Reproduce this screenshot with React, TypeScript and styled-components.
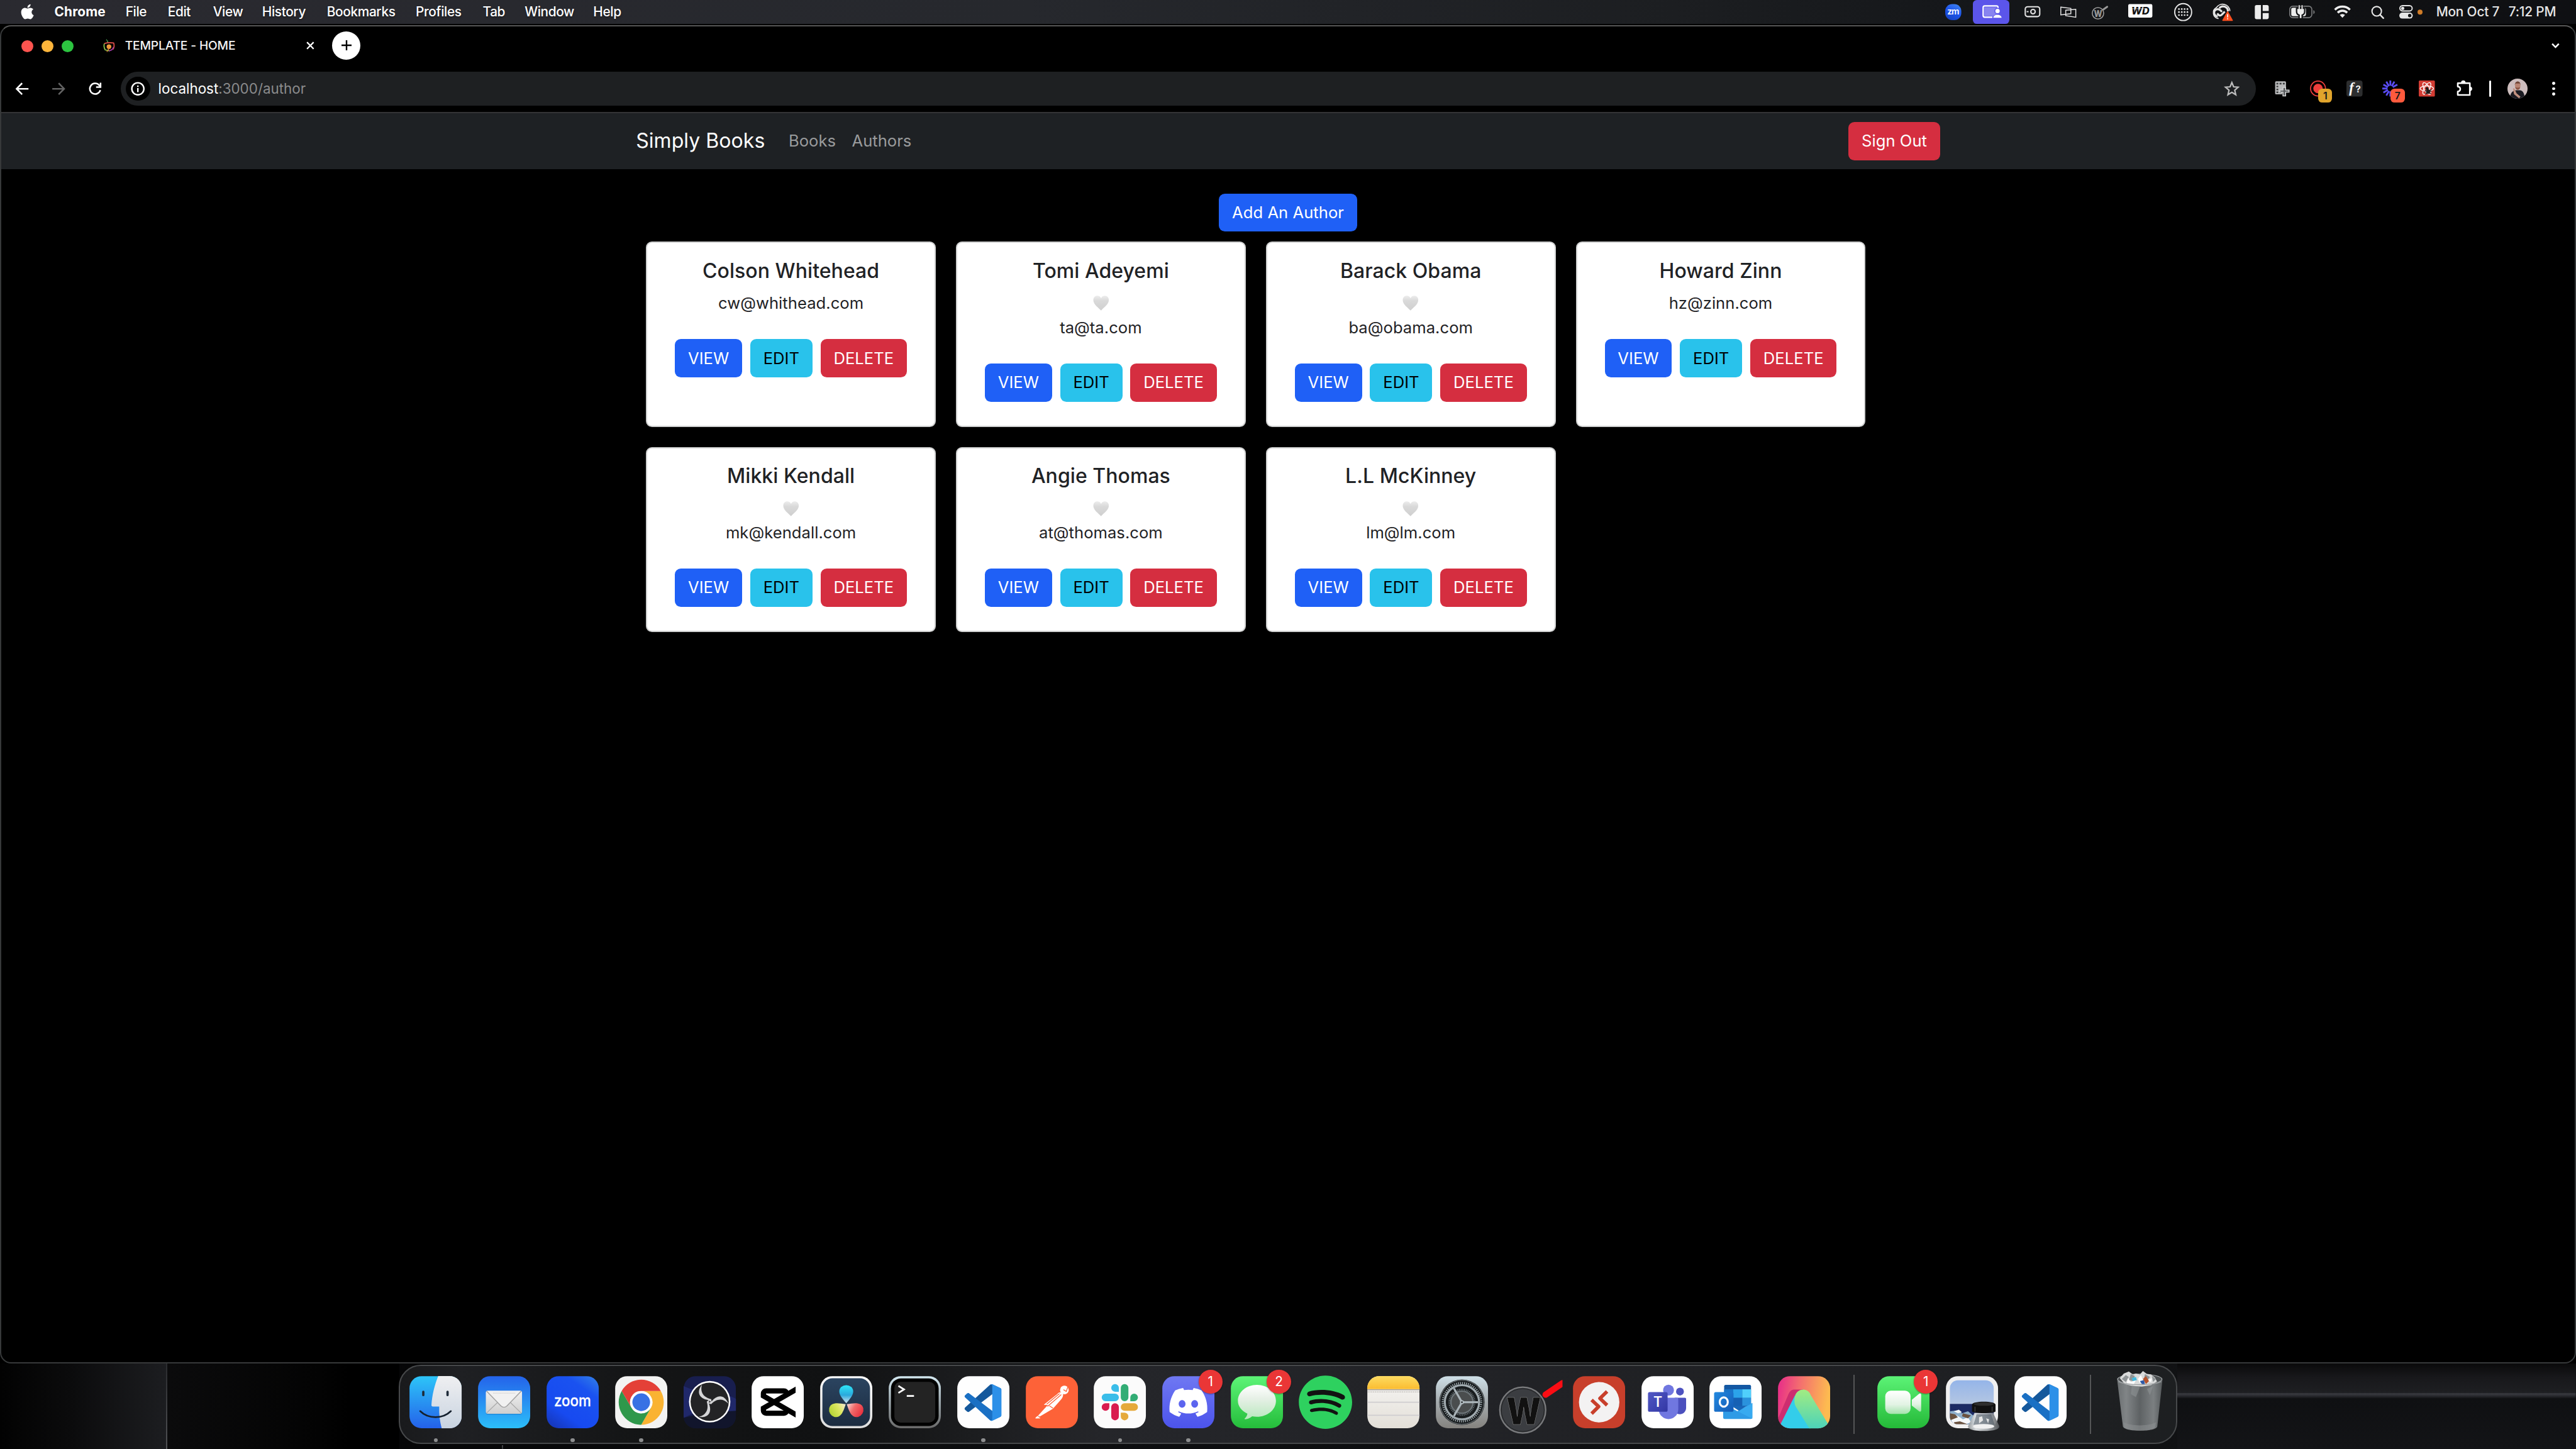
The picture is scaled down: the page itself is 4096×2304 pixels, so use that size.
import React, { ReactNode } from "react";
import styled, { createGlobalStyle, css } from "styled-components";
import { FaApple } from "react-icons/fa";
import { SiDiscord, SiSpotify } from "react-icons/si";

const GlobalStyle = createGlobalStyle`
  * { box-sizing: border-box; }
  html, body { margin: 0; padding: 0; background: #000; overflow: hidden; }
  body { font-family: Inter, "Liberation Sans", sans-serif; }
  button { font-family: inherit; }
`;

/* ---------- desktop ---------- */

const Desktop = styled.div`
  zoom: 1.6;
  width: 2560px;
  height: 1440px;
  display: flex;
  flex-direction: column;
  overflow: hidden;
  background: #000;
  color: #fff;
`;

/* ---------- menu bar ---------- */

const MenuBarRoot = styled.header`
  height: 24px;
  flex: none;
  display: flex;
  align-items: center;
  padding: 0 19.8px 0 20.3px;
  background: linear-gradient(90deg, #2a2a30 0%, #26282d 40%, #1c1e21 65%, #15171a 76%, #101113 88%, #0f1013 100%);
`;

const AppleMark = styled.span`
  width: 33.8px;
  display: flex;
  color: #fff;
  margin-top: -1px;
`;

const MenuItem = styled.span<{ $w: number; $bold?: boolean }>`
  width: ${(p) => p.$w}px;
  flex: none;
  white-space: nowrap;
  font-size: 13px;
  line-height: 24px;
  font-weight: ${(p) => (p.$bold ? 700 : 500)};
  letter-spacing: ${(p) => (p.$bold ? "0.1px" : "-0.22px")};
  text-shadow: 0 1px 2px rgba(0, 0, 0, 0.35);
`;

const StatusArea = styled.div`
  margin-left: auto;
  height: 24px;
  display: flex;
  align-items: center;
`;

const StatusIcon = styled.span<{ $gap: number; $w: number }>`
  width: ${(p) => p.$w}px;
  height: 24px;
  margin-left: ${(p) => p.$gap}px;
  display: flex;
  flex: none;
  svg { display: block; }
`;

const SharePill = styled(StatusIcon)`
  background: #5b55ea;
  border-radius: 4px;
`;

const Clock = styled.span`
  display: flex;
  gap: 9px;
  margin-left: 13.5px;
  font-size: 13px;
  font-weight: 500;
  line-height: 24px;
  letter-spacing: -0.1px;
  color: #e6e6e6;
  white-space: nowrap;
`;

const MENU: { label: string; w: number; bold?: boolean }[] = [
  { label: "Chrome", w: 70.7, bold: true },
  { label: "File", w: 41.9 },
  { label: "Edit", w: 45 },
  { label: "View", w: 48.8 },
  { label: "History", w: 64.4 },
  { label: "Bookmarks", w: 88.3 },
  { label: "Profiles", w: 66.5 },
  { label: "Tab", w: 41.7 },
  { label: "Window", w: 68.2 },
  { label: "Help", w: 30 },
];

function Glyph({ w, children }: { w: number; children: ReactNode }) {
  return (
    <svg width={w} height={24} viewBox={`0 0 ${w} 24`} fill="none" overflow="visible">
      {children}
    </svg>
  );
}

const dotRows = [9, 12, 15];
const dotCols = [4.8, 7.6, 10.4, 13.2];

function MenuBar() {
  return (
    <MenuBarRoot>
      <AppleMark>
        <FaApple size={17} style={{ marginLeft: -1.6 }} />
      </AppleMark>
      {MENU.map((m) => (
        <MenuItem key={m.label} $w={m.w} $bold={m.bold}>
          {m.label}
        </MenuItem>
      ))}
      <StatusArea>
        <StatusIcon $gap={0} $w={16}>
          <Glyph w={16}>
            <defs>
              <linearGradient id="zm" x1="0.8" y1="0" x2="0.3" y2="1">
                <stop offset="0" stopColor="#3f82ee" />
                <stop offset="0.5" stopColor="#1d55ee" />
                <stop offset="1" stopColor="#1743c4" />
              </linearGradient>
            </defs>
            <rect x="0" y="4" width="16" height="16" rx="7" fill="url(#zm)" />
            <text x="2" y="14.3" fontFamily="Inter, sans-serif" fontSize="8.6" fontWeight="600" fill="#fff" textLength="12">zm</text>
          </Glyph>
        </StatusIcon>
        <SharePill $gap={12} $w={36}>
          <Glyph w={36}>
            <path d="M25 9.5V7.5a1.6 1.6 0 0 0-1.6-1.6H11.8a1.6 1.6 0 0 0-1.6 1.6v8a1.6 1.6 0 0 0 1.6 1.6h7.6" stroke="#fff" strokeWidth="1.4" />
            <rect x="11.4" y="7.2" width="12.3" height="8.8" fill="#fff" opacity="0.28" />
            <circle cx="24.5" cy="11" r="2.7" fill="#fff" stroke="#5b55ea" strokeWidth="1" />
            <path d="M20 18c0-2.2 2-3.6 4.4-3.6S28.8 15.800 28.800 18z" fill="#fff" stroke="#5b55ea" strokeWidth="0.6" />
          </Glyph>
        </SharePill>
        <StatusIcon $gap={15} $w={16}>
          <Glyph w={16}>
            <rect x="0.8" y="6.7" width="14.4" height="9.8" rx="2.4" stroke="#e2e2e2" strokeWidth="1.3" />
            <circle cx="8.5" cy="11.6" r="2.2" stroke="#e2e2e2" strokeWidth="1.3" />
            <path d="M2.200 11.600h1.900" stroke="#e2e2e2" strokeWidth="1.200" />
          </Glyph>
        </StatusIcon>
        <StatusIcon $gap={19.5} $w={16}>
          <Glyph w={16}>
            <path d="M.5 7l10 1.300v5.300L.5 14.800zM5.400 10.200l10-1v8l-10-1.600z" stroke="#e8e8e8" strokeWidth="0.900" />
          </Glyph>
        </StatusIcon>
        <StatusIcon $gap={15.5} $w={16}>
          <Glyph w={16}>
            <circle cx="6.200" cy="13.200" r="5.700" stroke="#9a9a9a" strokeWidth="1" />
            <text x="2.200" y="16.700" fontFamily="Inter, sans-serif" fontSize="9.500" fontWeight="800" fill="#9a9a9a" textLength="8.200" lengthAdjust="spacingAndGlyphs">W</text>
            <path d="M11.600 9.400L15.400 6.700" stroke="#9a9a9a" strokeWidth="1.800" strokeLinecap="round" />
          </Glyph>
        </StatusIcon>
        <StatusIcon $gap={20} $w={24}>
          <Glyph w={24}>
            <rect x="0" y="4" width="24" height="13.500" rx="1.500" fill="#fff" />
            <text x="3" y="14.500" fontFamily="Inter, sans-serif" fontSize="10" fontWeight="800" fontStyle="italic" fill="#111" textLength="18" lengthAdjust="spacingAndGlyphs">WD</text>
            <path d="M3.500 8.700H19" stroke="#fff" strokeWidth="0.350" />
          </Glyph>
        </StatusIcon>
        <StatusIcon $gap={22} $w={18}>
          <Glyph w={18}>
            <circle cx="9" cy="12" r="8.400" stroke="#e8e8e8" strokeWidth="1.200" />
            {dotRows.map((y) => dotCols.map((x) => <circle key={`${x}-${y}`} cx={x} cy={y} r="0.850" fill="#e8e8e8" />))}
          </Glyph>
        </StatusIcon>
        <StatusIcon $gap={19} $w={22}>
          <Glyph w={22}>
            <path d="M7.300 18.300H6.800A5.800 5.800 0 0 1 5.200 7.500 7.300 7.300 0 0 1 18.600 11" stroke="#e6e6e6" strokeWidth="1.100" />
            <path d="M6.500 16.300a3.600 3.600 0 0 1 0-7.200c1.900 0 2.700 1 4.200 2.700M8 8.200a4.800 4.800 0 0 1 8.600 3M6 13.300c1.400 2.200 3 2.700 4.300 1.500l3.200-3.300" stroke="#e6e6e6" strokeWidth="2" />
            <path d="M16.300 11.600L21 20.300H11.500z" fill="#fa4e1e" stroke="#fa4e1e" strokeLinejoin="round" />
            <path d="M16.300 14v3.300M16.300 18.200v1" stroke="#fff" strokeWidth="1" />
          </Glyph>
        </StatusIcon>
        <StatusIcon $gap={21} $w={14}>
          <Glyph w={14}>
            <path d="M2 5h4.300v14H2a1.800 1.800 0 0 1-1.800-1.800V6.800A1.800 1.800 0 0 1 2 5zM8 5h4.300A1.800 1.800 0 0 1 14 6.800V11H8zM8 13h6v4.200A1.800 1.800 0 0 1 12.300 19H8z" fill="#ececec" />
          </Glyph>
        </StatusIcon>
        <StatusIcon $gap={20} $w={26}>
          <Glyph w={26}>
            <rect x="0.500" y="6.200" width="22" height="11.400" rx="3.200" stroke="#7b7c7e" strokeWidth="1" />
            <path d="M24 10v4a2.200 2.200 0 0 0 0-4z" fill="#7b7c7e" />
            <rect x="2" y="7.700" width="14.600" height="8.400" rx="1.800" fill="#ececec" />
            <path d="M9.700 5.500v3M12.900 5.500v3M7.700 8.700h7.200v2.600a3.600 3.600 0 0 1-2.500 3.500V18h-2.200v-3.200a3.600 3.600 0 0 1-2.500-3.500z" fill="#ececec" stroke="#101113" strokeWidth="2.200" />
            <path d="M9.900 5.600v3.200M12.800 5.600v3.200" stroke="#ececec" strokeWidth="1.200" strokeLinecap="round" />
            <path d="M8 8.900h6.700v2.400a3.300 3.300 0 0 1-2.500 3.300V18h-1.700v-3.400A3.300 3.300 0 0 1 8 11.300z" fill="#ececec" />
          </Glyph>
        </StatusIcon>
        <StatusIcon $gap={18.5} $w={17}>
          <Glyph w={17}>
            <path d="M1 9.700a10.700 10.700 0 0 1 15 0M3.800 12.600a6.700 6.700 0 0 1 9.400 0" stroke="#ececec" strokeWidth="2.200" />
            <path d="M8.500 17.600L5.900 14.900a3.700 3.700 0 0 1 5.200 0z" fill="#ececec" />
          </Glyph>
        </StatusIcon>
        <StatusIcon $gap={20} $w={13}>
          <Glyph w={13}>
            <circle cx="5.700" cy="11.200" r="4.700" stroke="#e6e6e6" strokeWidth="1.300" />
            <path d="M9 14.600l3.300 3.400" stroke="#e6e6e6" strokeWidth="1.600" strokeLinecap="round" />
          </Glyph>
        </StatusIcon>
        <StatusIcon $gap={15.3} $w={13.5}>
          <Glyph w={13.5}>
            <rect x="0.600" y="5.600" width="12.200" height="5.300" rx="2.650" stroke="#e6e6e6" strokeWidth="1.200" />
            <circle cx="3.400" cy="8.250" r="1.600" fill="#e6e6e6" />
            <rect x="0" y="12.500" width="13.400" height="6" rx="3" fill="#e6e6e6" />
            <circle cx="10.400" cy="15.500" r="1.700" fill="#101113" />
          </Glyph>
        </StatusIcon>
        <StatusIcon $gap={4.5} $w={5}>
          <Glyph w={5}>
            <circle cx="2.500" cy="12" r="2.500" fill="#d07c28" />
          </Glyph>
        </StatusIcon>
        <Clock>
          <span>Mon Oct 7</span>
          <span>7:12 PM</span>
        </Clock>
      </StatusArea>
    </MenuBarRoot>
  );
}

/* ---------- browser window ---------- */

const BrowserWindow = styled.section`
  height: 1330px;
  margin-top: 1px;
  flex: none;
  display: flex;
  flex-direction: column;
  background: #000;
  border: 1.25px solid #37393a;
  border-top-color: #565656;
  border-radius: 11px;
  overflow: hidden;
`;

const TabStrip = styled.div`
  height: 38px;
  flex: none;
  display: flex;
  align-items: center;
  padding: 0 15px 0 20px;
`;

const TrafficLight = styled.i<{ $c: string }>`
  width: 12px;
  height: 12px;
  border-radius: 50%;
  margin: 1px 8px 0 0;
  background: ${(p) => p.$c};
`;

const Tab = styled.div`
  width: 210px;
  margin-left: 21px;
  display: flex;
  align-items: center;
  gap: 10px;
`;

const TabTitle = styled.span`
  flex: 1;
  font-size: 12px;
  font-weight: 500;
  letter-spacing: -0.1px;
  line-height: 16px;
  color: #f4f4f4;
`;

const NewTab = styled.button`
  width: 28px;
  height: 28px;
  border: 0;
  padding: 0;
  border-radius: 50%;
  background: #fff;
  margin-left: 18px;
  display: grid;
  place-items: center;
`;

const TabSearch = styled.span`
  margin-left: auto;
  display: flex;
`;

const Toolbar = styled.div`
  height: 48px;
  flex: none;
  display: flex;
  align-items: center;
  padding: 1px 13px 0 7px;
  border-bottom: 1.25px solid #333436;
`;

const NavButton = styled.span`
  width: 28px;
  height: 28px;
  margin-right: 8px;
  display: grid;
  place-items: center;
`;

const Omnibox = styled.div`
  flex: 1;
  height: 34px;
  margin-left: 4px;
  border-radius: 17px;
  background: #1e2022;
  display: flex;
  align-items: center;
  padding: 0 16px 0 5px;
  font-size: 14px;
  svg { display: block; }
`;

const SiteInfo = styled.span`
  width: 24px;
  height: 24px;
  border-radius: 50%;
  background: #000;
  display: grid;
  place-items: center;
  margin-right: 8px;
`;

const Url = styled.span`
  flex: 1;
  color: #fff;
  span { color: #8a8b8c; }
`;

const Extensions = styled.div`
  display: flex;
  gap: 20px;
  margin-left: 18px;
`;

const Extension = styled.span`
  position: relative;
  width: 16px;
  height: 16px;
  svg { display: block; overflow: visible; }
`;

const ExtensionBadge = styled.b<{ $c: string }>`
  position: absolute;
  left: 8px;
  top: 8px;
  width: 14px;
  height: 14px;
  border-radius: 4px;
  background: ${(p) => p.$c};
  color: #1b1b1b;
  font-size: 10px;
  font-weight: 600;
  line-height: 14px;
  text-align: center;
`;

const ToolbarDivider = styled.i`
  width: 2px;
  height: 16px;
  border-radius: 1px;
  background: #fff;
  margin: 0 16px 0 18px;
`;

const Avatar = styled.span`
  width: 20px;
  height: 20px;
  border-radius: 50%;
  overflow: hidden;
  svg { display: block; }
`;

const Kebab = styled.span`
  margin-left: 18px;
  width: 16px;
  display: flex;
  flex-direction: column;
  align-items: center;
  gap: 2.5px;
  i { width: 3px; height: 3px; border-radius: 50%; background: #fff; }
`;

const spokes = [0, 30, 60, 180, 210, 240, 270, 300, 330];

function BrowserChrome() {
  return (
    <>
      <TabStrip>
        <TrafficLight $c="#fe544f" />
        <TrafficLight $c="#fdb53b" />
        <TrafficLight $c="#2cc440" />
        <Tab>
          <svg width="12" height="13" viewBox="0 0 12 13" fill="none" overflow="visible">
            <path d="M4.800 3.600L3.200.3M5 3.600L4.200 1.500" stroke="#3f8f4a" strokeWidth="0.800" />
            <path d="M1.200 4.600c-.6 2-.5 4 .8 6.200l4.400 1" stroke="#8bc34a" strokeWidth="1.100" />
            <path d="M1.300 4.500C4 3.600 8 3.500 10.500 4c.7 2.200.4 4.500-.6 6.400" stroke="#e2504a" strokeWidth="1.100" />
            <path d="M10.300 8c-.4 2-2 3.300-4.500 3.800" stroke="#a63da8" strokeWidth="1.100" />
            <circle cx="5.800" cy="7.600" r="2.300" fill="#ef9a3a" />
            <path d="M4 11.500v1.300M5.800 9l-1 2.500" stroke="#e5893a" strokeWidth="0.900" />
          </svg>
          <TabTitle>TEMPLATE - HOME</TabTitle>
          <svg width="8" height="8" viewBox="0 0 8 8">
            <path d="M.7.700l6.600 6.600M7.300.700L.7 7.300" stroke="#fff" strokeWidth="1.400" />
          </svg>
        </Tab>
        <NewTab>
          <svg width="10" height="10" viewBox="0 0 10 10">
            <path d="M5 0v10M0 5h10" stroke="#000" strokeWidth="1.500" />
          </svg>
        </NewTab>
        <TabSearch>
          <svg width="8" height="6" viewBox="0 0 8 6" fill="none">
            <path d="M.7 1l3.300 3.400L7.300 1" stroke="#fff" strokeWidth="1.600" />
          </svg>
        </TabSearch>
      </TabStrip>
      <Toolbar>
        <NavButton>
          <svg width="14" height="14" viewBox="0 0 14 14" fill="none">
            <path d="M13.300 7H1.800M7 1.400L1.500 7l5.500 5.600" stroke="#fff" strokeWidth="1.600" />
          </svg>
        </NavButton>
        <NavButton>
          <svg width="14" height="14" viewBox="0 0 14 14" fill="none">
            <path d="M.7 7h11.500M7 1.400L12.500 7 7 12.600" stroke="#626262" strokeWidth="1.600" />
          </svg>
        </NavButton>
        <NavButton>
          <svg width="14" height="14" viewBox="0 0 14 14" fill="none">
            <path d="M12.200 8.300A5.300 5.300 0 1 1 11 3.300L12.300 4.700" stroke="#fff" strokeWidth="1.600" />
            <path d="M12.400 1v4.300H8" stroke="#fff" strokeWidth="1.600" />
          </svg>
        </NavButton>
        <Omnibox>
          <SiteInfo>
            <svg width="14" height="14" viewBox="0 0 14 14" fill="none">
              <circle cx="7" cy="7" r="6" stroke="#fff" strokeWidth="1.500" />
              <path d="M7 6.300v4M7 3.700v1.500" stroke="#fff" strokeWidth="1.500" />
            </svg>
          </SiteInfo>
          <Url>
            localhost<span>:3000/author</span>
          </Url>
          <svg width="16" height="16" viewBox="0 0 16 16" fill="none">
            <path d="M8 2l1.750 4.250 4.550.4-3.450 3 1.050 4.450L8 11.700l-3.900 2.400 1.050-4.450-3.450-3 4.550-.4z" stroke="#bdbdbd" strokeWidth="1.400" />
          </svg>
        </Omnibox>
        <Extensions>
          <Extension>
            <svg width="16" height="16" viewBox="0 0 16 16" fill="none">
              <path d="M2 .8h8.800a1 1 0 0 1 1 1V8L8 9v4.800H2a1 1 0 0 1-1-1v-11a1 1 0 0 1 1-1z" fill="#b9babb" />
              <path d="M2.300 3.100h1.800M5.400 3.100h1.900M8.700 3.100h1.800M2.300 6h1.800M2.300 8.900h1.800M2.300 11.700h1.800M5.400 11.700h1.300" stroke="#3a3b3c" strokeWidth="1.500" />
              <path d="M8.800 6.900h2.600v2.600h3.400v2.100h-3.400v3.700H8.800v-3.700H5.600V9.500h3.200z" fill="#55585a" stroke="#d0d1d2" strokeWidth="1" />
            </svg>
          </Extension>
          <Extension>
            <svg width="16" height="16" viewBox="0 0 16 16" fill="none">
              <circle cx="8" cy="8" r="7.400" stroke="#ee3f3c" strokeWidth="1.100" />
              <circle cx="8" cy="8" r="4.700" fill="#ee3f3c" />
            </svg>
            <ExtensionBadge $c="#e0a42c">1</ExtensionBadge>
          </Extension>
          <Extension>
            <svg width="16" height="16" viewBox="0 0 16 16">
              <rect width="16" height="16" rx="2.500" fill="#2d2e2f" />
              <text x="2.600" y="12" fontFamily="'Liberation Serif', serif" fontStyle="italic" fontWeight="700" fontSize="14" fill="#fff">f</text>
              <text x="9" y="12" fontFamily="Inter, sans-serif" fontWeight="600" fontSize="9.500" fill="#fff">?</text>
            </svg>
          </Extension>
          <Extension>
            <svg width="16" height="16" viewBox="0 0 16 16">
              {spokes.map((a) => (
                <path key={a} d="M8 0v5.200" stroke="#5a4cf6" strokeWidth="1.800" transform={`rotate(${a} 8 8)`} />
              ))}
            </svg>
            <ExtensionBadge $c="#ff5a3d">7</ExtensionBadge>
          </Extension>
          <Extension>
            <svg width="16" height="16" viewBox="0 0 16 16" fill="none">
              <rect width="16" height="16" rx="1" fill="#d23c33" />
              <g stroke="#fff" strokeWidth="0.800">
                <ellipse cx="8" cy="8" rx="6.600" ry="2.600" />
                <ellipse cx="8" cy="8" rx="6.600" ry="2.600" transform="rotate(60 8 8)" />
                <ellipse cx="8" cy="8" rx="6.600" ry="2.600" transform="rotate(120 8 8)" />
              </g>
              <ellipse cx="9.200" cy="11" rx="1.700" ry="2.400" fill="#1d1d1d" />
              <circle cx="8.200" cy="7.900" r="1.400" fill="#1d1d1d" />
              <path d="M6.200 10l6 3M12.300 8.800l-5.800 5M7 12.400l5.500-2" stroke="#1d1d1d" strokeWidth="0.900" />
            </svg>
          </Extension>
          <Extension>
            <svg width="16" height="16" viewBox="0 0 16 16" fill="none">
              <path d="M2.500 2.300h12v11.800h-12V10.700a2.500 2.500 0 0 0 0-5z" transform="translate(0 .3)" stroke="#fff" strokeWidth="1.600" strokeLinejoin="round" />
              <path d="M5.900 2.200a2.100 2.100 0 0 1 4.200 0zM14.600 6.300a2 2 0 0 1 0 4z" fill="#fff" stroke="#fff" strokeWidth="0.500" />
            </svg>
          </Extension>
        </Extensions>
        <ToolbarDivider />
        <Avatar>
          <svg width="20" height="20" viewBox="0 0 20 20">
            <rect width="20" height="20" fill="#cdbdbd" />
            <path d="M2.500 20c0-5 2-8 6-8.500h4c3.500.5 4.500 4 4.500 8.500z" fill="#1b1b22" />
            <ellipse cx="10.200" cy="7" rx="2.700" ry="3.700" fill="#b98472" />
            <path d="M7.300 6.500c0-5 5.800-5 5.800 0l-.7-1.700H8z" fill="#6e4334" />
            <path d="M7.700 8.300c.5 3.800 4.500 3.800 5 0-1.300 1-3.500 1-5 0z" fill="#8a5342" />
            <path d="M5.500 9.500l1.500.3L9 14.500l4 3.500-1.500 1.500-5-4z" fill="#c0907f" />
          </svg>
        </Avatar>
        <Kebab>
          <i />
          <i />
          <i />
        </Kebab>
      </Toolbar>
    </>
  );
}

/* ---------- page ---------- */

type Variant = "primary" | "info" | "danger";

const variants: Record<Variant, ReturnType<typeof css>> = {
  primary: css`background: #1f60f6; color: #fff;`,
  info: css`background: #29c2eb; color: #000;`,
  danger: css`background: #d52e40; color: #fff;`,
};

const Button = styled.button<{ $variant: Variant }>`
  height: 38px;
  padding: 0 13px;
  border: 0;
  border-radius: 6px;
  font-size: 16px;
  line-height: 24px;
  letter-spacing: 0.02px;
  white-space: nowrap;
  ${(p) => variants[p.$variant]}
`;

const Navbar = styled.nav`
  height: 56px;
  flex: none;
  background: #1e2124;
  display: flex;
  justify-content: center;
`;

const NavContainer = styled.div`
  width: 1296px;
  display: flex;
  align-items: center;
`;

const Brand = styled.a`
  font-size: 20px;
  line-height: 30px;
  margin-right: 15.5px;
  letter-spacing: 0.03px;
`;

const NavLink = styled.a`
  padding: 8px;
  font-size: 16px;
  line-height: 24px;
  color: #999b9c;
`;

const SignOutSlot = styled.div`
  margin-left: auto;
`;

const Page = styled.main`
  width: 1296px;
  margin: 24px auto 0;
  display: flex;
  flex-direction: column;
  align-items: center;
`;

const CardGrid = styled.div`
  width: 100%;
  display: flex;
  flex-wrap: wrap;
`;

const Card = styled.article`
  width: 288px;
  height: 184px;
  margin: 10px;
  padding: 16px 15px;
  border: 1.25px solid #cfd0d0;
  border-radius: 6px;
  background: #fff;
  color: #1f2225;
  display: flex;
  flex-direction: column;
  align-items: center;
`;

const AuthorName = styled.h5`
  margin: 0 0 8px;
  font-size: 20px;
  font-weight: 500;
  line-height: 24px;
  letter-spacing: 0.03px;
`;

const Favorite = styled.div`
  height: 24px;
  display: flex;
  align-items: center;
  svg { display: block; }
`;

const Email = styled.p`
  margin: 0 0 23.6px;
  font-size: 16px;
  line-height: 24px;
  letter-spacing: 0.02px;
`;

const CardActions = styled.div`
  display: flex;
  gap: 8px;
`;

const AUTHORS = [
  { name: "Colson Whitehead", email: "cw@whithead.com", favorite: false },
  { name: "Tomi Adeyemi", email: "ta@ta.com", favorite: true },
  { name: "Barack Obama", email: "ba@obama.com", favorite: true },
  { name: "Howard Zinn", email: "hz@zinn.com", favorite: false },
  { name: "Mikki Kendall", email: "mk@kendall.com", favorite: true },
  { name: "Angie Thomas", email: "at@thomas.com", favorite: true },
  { name: "L.L McKinney", email: "lm@lm.com", favorite: true },
];

function Heart() {
  return (
    <svg width="16" height="15" viewBox="0 0 16 15">
      <defs>
        <linearGradient id="heart" x1="0" y1="0" x2="0" y2="1">
          <stop offset="0" stopColor="#ececec" />
          <stop offset="0.35" stopColor="#d9d9d9" />
          <stop offset="1" stopColor="#cfcfcf" />
        </linearGradient>
      </defs>
      <path d="M8 14.800C5.800 12.300.3 8.900.3 4.500.3 1.900 2 .2 4.300.2c1.700 0 3 .9 3.700 2.400C8.700 1.100 10 .2 11.700.2c2.300 0 4 1.700 4 4.300 0 4.400-5.500 7.800-7.700 10.300z" fill="url(#heart)" />
    </svg>
  );
}

function AuthorsPage() {
  return (
    <>
      <Navbar>
        <NavContainer>
          <Brand>Simply Books</Brand>
          <NavLink>Books</NavLink>
          <NavLink>Authors</NavLink>
          <SignOutSlot>
            <Button $variant="danger">Sign Out</Button>
          </SignOutSlot>
        </NavContainer>
      </Navbar>
      <Page>
        <Button $variant="primary">Add An Author</Button>
        <CardGrid>
          {AUTHORS.map((a) => (
            <Card key={a.name}>
              <AuthorName>{a.name}</AuthorName>
              {a.favorite && (
                <Favorite>
                  <Heart />
                </Favorite>
              )}
              <Email>{a.email}</Email>
              <CardActions>
                <Button $variant="primary">VIEW</Button>
                <Button $variant="info">EDIT</Button>
                <Button $variant="danger">DELETE</Button>
              </CardActions>
            </Card>
          ))}
        </CardGrid>
      </Page>
    </>
  );
}

/* ---------- dock ---------- */

const Wallpaper = styled.footer`
  flex: 1;
  display: flex;
  justify-content: center;
  align-items: flex-start;
  padding-top: 1px;
  background:
    linear-gradient(90deg, #020202 0, #0b0b0c 70px, #1c1d20 164px) 0 0 / 165px 100% no-repeat,
    linear-gradient(#2a2b2e, #505154) 165px 0 / 1.25px 100% no-repeat,
    linear-gradient(90deg, #0b0b0c 0, #030303 150px, #000 180px) 167px 0 / 230px 100% no-repeat,
    linear-gradient(#4a4b4e, #2a2b2e) 499px 100% / 1.25px 4px no-repeat,
    linear-gradient(#0a0a0b 0, #18181b 14px, #1e1f22 29px, #3a3b41 30px, #2b2c31 32px, #0f1012 35px, #131417 100%) 2164px 0 / 396px 100% no-repeat,
    linear-gradient(90deg, #141517 0, #050506 300px, #0c0d0f 900px, #121315 100%);
`;

const DockBar = styled.div`
  height: 79px;
  display: flex;
  gap: 16px;
  padding: 10px 9.5px 0;
  border: 1.25px solid #47494b;
  border-radius: 22px;
  background: linear-gradient(90deg, #191a1c 0, #1f2023 60px, #141516 230px, #101112 430px, #1b1c1e 560px, #25262a 700px, #222327 1000px, #1f2023 1400px, #1d1f21 100%);
`;

const DockItem = styled.div`
  position: relative;
  width: 52px;
  height: 52px;
  svg { display: block; overflow: visible; }
`;

const DockBadge = styled.span`
  position: absolute;
  top: -6px;
  right: -8px;
  width: 24px;
  height: 24px;
  border-radius: 50%;
  background: #ea3636;
  color: #fff;
  font-size: 13px;
  line-height: 24px;
  text-align: center;
  box-shadow: 0 0.5px 1.5px rgba(0, 0, 0, 0.4);
`;

const RunningDot = styled.i`
  position: absolute;
  left: 24px;
  top: 62px;
  width: 4px;
  height: 4px;
  border-radius: 50%;
  background: #8e8f90;
`;

const DockDivider = styled.i`
  width: 1px;
  height: 59px;
  margin: -1px 7px 0;
  background: #545556;
`;

const Shape = ({ fill, children }: { fill: string; children?: ReactNode }) => (
  <>
    <rect x="0.100" y="0.100" width="51.800" height="51.800" rx="12" fill={fill} />
    {children}
  </>
);

const Grad = ({ id, stops, x1 = 0, y1 = 0, x2 = 0, y2 = 1 }: { id: string; stops: [number, string][]; x1?: number; y1?: number; x2?: number; y2?: number }) => (
  <linearGradient id={id} x1={x1} y1={y1} x2={x2} y2={y2}>
    {stops.map(([o, c]) => (
      <stop key={o} offset={o} stopColor={c} />
    ))}
  </linearGradient>
);

function FinderArt() {
  return (
    <>
      <Grad id="fin1" stops={[[0, "#2dc5f8"], [1, "#2461ea"]]} />
      <Grad id="fin2" stops={[[0, "#efeff1"], [1, "#c8d3e0"]]} />
      <clipPath id="sq"><rect width="52" height="52" rx="12" /></clipPath>
      <Shape fill="url(#fin1)" />
      <path clipPath="url(#sq)" d="M28.600 0C25 9 22.500 19 21.900 28.600c-.1 1.200.4 1.700 1.500 1.700h6.200c-.3 8 .7 15 2.500 21.700H52V0z" fill="url(#fin2)" />
      <path d="M13.800 15.700v3.200M37.900 15.700v3.200" stroke="#1e2a38" strokeWidth="2.300" strokeLinecap="round" />
      <path d="M10.700 34.900c8 8 22.500 8 30.500 0" fill="none" stroke="#14202e" strokeWidth="1.700" strokeLinecap="round" />
    </>
  );
}

function MailArt() {
  return (
    <>
      <Grad id="mail" stops={[[0, "#2463ea"], [1, "#2cbef9"]]} />
      <Grad id="env" stops={[[0, "#f0f0f0"], [1, "#cfcfcf"]]} />
      <Shape fill="url(#mail)" />
      <rect x="7.800" y="14.800" width="36" height="23.500" rx="2" fill="#0a4fa0" opacity="0.35" />
      <rect x="7.800" y="14.500" width="36" height="23" rx="2" fill="url(#env)" />
      <path d="M8.500 36.800l10.800-10.400M43 36.800L32.300 26.400" stroke="#a9a9a9" strokeWidth="0.800" />
      <path d="M8.600 15l14.200 14.700c1.800 1.700 4.200 1.700 6 0L43 15" fill="#f1f1f1" stroke="#a3a3a3" strokeWidth="1" />
      <path d="M15 17h22" stroke="#d8d8d8" strokeWidth="0.900" strokeDasharray="1 0.400" />
    </>
  );
}

function ZoomArt() {
  return (
    <>
      <Grad id="zoomg" x1={0.9} y1={0} x2={0.2} y2={1} stops={[[0, "#2f7ae8"], [0.25, "#1a52f0"], [0.75, "#174af0"], [1, "#1639c0"]]} />
      <Shape fill="url(#zoomg)" />
      <text x="7.500" y="30" fontFamily="Inter, sans-serif" fontSize="15.600" fontWeight="500" fill="#fff" stroke="#fff" strokeWidth="0.200" textLength="36.800" lengthAdjust="spacingAndGlyphs">zoom</text>
    </>
  );
}

function ChromeArt() {
  const seg = "M-19.400-11.200A22.400 22.400 0 0 1 19.400-11.200H0A11.200 11.200 0 0 0-9.700 5.600z";
  return (
    <>
      <Shape fill="#f3f3f2" />
      <g transform="translate(26 26)">
        <path d={seg} fill="#fab332" transform="rotate(120)" />
        <path d={seg} fill="#2f984b" transform="rotate(240)" />
        <path d={seg} fill="#e44037" />
        <circle r="11" fill="#fff" />
        <circle r="8.800" fill="#3871e4" />
      </g>
    </>
  );
}

function ObsArt() {
  const blade = "M-7.600-17C-13.500-9.500-10.500-3-1.500-1.600L2 .5 1.500-2.500C-5.500-4-10-9-7.600-17z";
  return (
    <>
      <Shape fill="#181e4e">
        <path d="M0 10L10 14 16 34 0 41.500zM40 17l12 5.500V34.500l-12 3z" fill="#20286a" />
        <path d="M0 41.500l20-5 32-2V40a12 12 0 0 1-12 12H12A12 12 0 0 1 0 40z" fill="#11152c" />
      </Shape>
      <g transform="translate(25.900 25.500)">
        <circle r="20.600" fill="#fff" />
        <circle r="19" fill="#232325" />
        {[0, 120, 240].map((a) => (
          <path key={a} d={blade} fill="#d4d4d6" transform={`rotate(${a})`} />
        ))}
      </g>
    </>
  );
}

function CapCutArt() {
  const half = "M46 39.500L11.800 19.800V17.500a2.700 2.700 0 0 1 2.700-2.700H32.200a2.700 2.700 0 0 1 2.700 2.700V20";
  return (
    <>
      <Shape fill="#fff" />
      <clipPath id="cc"><rect x="8" y="10" width="35.800" height="32" /></clipPath>
      <g clipPath="url(#cc)" fill="none" stroke="#000" strokeWidth="5.200">
        <path d={half} />
        <path d={half} transform="matrix(1 0 0 -1 0 51.800)" />
      </g>
    </>
  );
}

function ResolveArt() {
  const petal = "M0-.6C-3.800-5-6.900-8.800-6.900-12.400a6.900 6.300 0 0 1 13.800 0C6.900-8.800 3.800-5 0-.6z";
  return (
    <>
      <Grad id="rs0" stops={[[0, "#fdfdfd"], [1, "#dcdcdc"]]} />
      <Grad id="rs1" stops={[[0, "#2b4460"], [1, "#1c2c40"]]} />
      <Grad id="rs2" stops={[[0, "#2ee6f8"], [0.55, "#2aa9dc"], [1, "#d8e6f0"]]} />
      <Grad id="rs3" stops={[[0, "#b4d435"], [0.55, "#dde860"], [1, "#f6e8d8"]]} />
      <Grad id="rs4" stops={[[0, "#e8303e"], [0.55, "#f06a6a"], [1, "#f8dcd8"]]} />
      <Shape fill="url(#rs0)" />
      <rect x="2.300" y="2.200" width="47.300" height="47.500" rx="10" fill="url(#rs1)" />
      <g transform="translate(26 27.700)">
        <path d={petal} fill="url(#rs2)" />
        <path d={petal} fill="url(#rs3)" transform="rotate(-121)" />
        <path d={petal} fill="url(#rs4)" transform="rotate(121)" />
      </g>
    </>
  );
}

function TerminalArt() {
  return (
    <>
      <Grad id="tm" stops={[[0, "#d3e8f0"], [0.5, "#9aa5aa"], [1, "#6a6a6a"]]} />
      <Shape fill="url(#tm)" />
      <rect x="2.300" y="2.300" width="47.400" height="47.400" rx="10" fill="#020202" />
      <rect x="5.700" y="5.800" width="40.600" height="40.400" rx="6" fill="#232323" />
      <path d="M9.700 9.800l5.600 3.500-5.600 3.500M18 19.800h7.200" fill="none" stroke="#fff" strokeWidth="1.700" />
    </>
  );
}

function VsCodeArt() {
  return (
    <>
      <Shape fill="#fefefe" />
      <g transform="translate(7.400 8) scale(.366)">
        <path fill="#14589c" d="M96.460 10.800L75.860.88C73.470-.27 70.620.21 68.750 2.080L1.300 63.580C-.52 65.240-.51 68.090 1.300 69.750L6.810 74.750C8.300 76.100 10.530 76.200 12.130 74.990L93.360 13.370C96.090 11.300 100 13.250 100 16.670V16.430C100 14.030 98.620 11.840 96.460 10.800Z" />
        <path fill="#1a70c4" d="M96.460 89.200L75.860 99.120C73.470 100.270 70.620 99.790 68.750 97.920L1.300 36.420C-.52 34.760-.51 31.910 1.300 30.250L6.810 25.250C8.300 23.900 10.530 23.800 12.130 25.010L93.360 86.630C96.090 88.700 100 86.750 100 83.330V83.570C100 85.970 98.620 88.160 96.460 89.200Z" />
        <path fill="#2c90e8" d="M75.860 99.130C73.470 100.270 70.620 99.790 68.750 97.920C71.060 100.220 75 98.590 75 95.330V4.670C75 1.410 71.060-.22 68.750 2.080C70.620.21 73.470-.27 75.860.87L96.460 10.780C98.620 11.820 100 14.010 100 16.410V83.590C100 85.990 98.620 88.180 96.460 89.220L75.860 99.130Z" />
      </g>
    </>
  );
}

function PostmanArt() {
  return (
    <>
      <Shape fill="#fd6238" />
      <circle cx="38.400" cy="13.900" r="4.300" fill="#fff" />
      <path d="M31.500 17.800c1.500-2 3.700-2 5.500-.3.500 2-.3 3.800-1.600 5.500L27 32.500 13.500 40.500l1 1.500-4.800.2c-.3-1 .8-1.800 2-2.200L21.500 29.200 18 28.500z" fill="#fff" />
      <path d="M35.300 18.500L22 29.800 19.300 28.800M33.500 17.500L20.800 28M23.500 29.500l3.700 2.500M12.500 39.800l1.300 1.300M37.500 13.500l2.800 1.800 1.500-4.500" fill="none" stroke="#fd6238" strokeWidth="0.800" />
    </>
  );
}

const SLACK: [string, string][] = [
  ["#d91c4f", "M5.042 15.165a2.528 2.528 0 0 1-2.520 2.523A2.528 2.528 0 0 1 0 15.165a2.527 2.527 0 0 1 2.522-2.520h2.520zM6.313 15.165a2.527 2.527 0 0 1 2.521-2.520 2.527 2.527 0 0 1 2.521 2.520v6.313A2.528 2.528 0 0 1 8.834 24a2.528 2.528 0 0 1-2.521-2.522z"],
  ["#3abde9", "M8.834 5.042a2.528 2.528 0 0 1-2.521-2.520A2.528 2.528 0 0 1 8.834 0a2.528 2.528 0 0 1 2.521 2.522v2.520zM8.834 6.313a2.528 2.528 0 0 1 2.521 2.521 2.528 2.528 0 0 1-2.521 2.521H2.522A2.528 2.528 0 0 1 0 8.834a2.528 2.528 0 0 1 2.522-2.521z"],
  ["#32ad75", "M18.956 8.834a2.528 2.528 0 0 1 2.522-2.521A2.528 2.528 0 0 1 24 8.834a2.528 2.528 0 0 1-2.522 2.521h-2.522zM17.688 8.834a2.528 2.528 0 0 1-2.523 2.521 2.527 2.527 0 0 1-2.520-2.521V2.522A2.527 2.527 0 0 1 15.165 0a2.528 2.528 0 0 1 2.523 2.522z"],
  ["#e5a93b", "M15.165 18.956a2.528 2.528 0 0 1 2.523 2.522A2.528 2.528 0 0 1 15.165 24a2.527 2.527 0 0 1-2.520-2.522v-2.522zM15.165 17.688a2.527 2.527 0 0 1-2.520-2.523 2.526 2.526 0 0 1 2.520-2.520h6.313A2.527 2.527 0 0 1 24 15.165a2.528 2.528 0 0 1-2.522 2.523z"],
];

function SlackArt() {
  return (
    <>
      <Shape fill="#fbfbfb" />
      <g transform="translate(8 8) scale(1.5)">
        {SLACK.map(([c, d]) => (
          <path key={c} d={d} fill={c} />
        ))}
      </g>
    </>
  );
}

function DiscordArt() {
  return (
    <>
      <Grad id="dc" stops={[[0, "#6f78f2"], [1, "#4c54ec"]]} />
      <Shape fill="url(#dc)" />
      <SiDiscord x={7.2} y={7.4} size={37.6} color="#fff" />
    </>
  );
}

function MessagesArt() {
  return (
    <>
      <Grad id="ms" stops={[[0, "#5df477"], [1, "#25bd3b"]]} />
      <Grad id="msb" stops={[[0, "#ffffff"], [0.4, "#e6f0e6"], [1, "#b8e8bd"]]} />
      <Shape fill="url(#ms)" />
      <path d="M26 8.800c10.500 0 18.900 7.100 18.900 15.900S36.500 40.500 26 40.500c-1.600 0-3.200-.2-4.700-.5-2 1.600-4.300 2.700-7 2.900-.6 0-.7-.5-.3-.9 1.600-1.400 2.400-2.900 2.500-4.600C10.900 34.700 7.100 30 7.100 24.700 7.100 15.900 15.500 8.800 26 8.800z" fill="url(#msb)" />
    </>
  );
}

function SpotifyArt() {
  return (
    <>
      <circle cx="26" cy="26" r="25" fill="#121212" />
      <SiSpotify x={-0.5} y={-0.5} size={53} color="#2ed15f" />
    </>
  );
}

function NotesArt() {
  return (
    <>
      <Grad id="nt" stops={[[0, "#fddb62"], [1, "#fbbc30"]]} />
      <Grad id="ntp" stops={[[0, "#f7f6f4"], [1, "#e3dfd8"]]} />
      <Shape fill="url(#ntp)" />
      <path d="M0 13V12A12 12 0 0 1 12 0H40A12 12 0 0 1 52 12V13z" fill="url(#nt)" />
      <path d="M0 13.600H52" stroke="#a8a29a" strokeWidth="0.900" />
      <path d="M0.500 15.800H52" stroke="#b5b2ae" strokeWidth="1" strokeDasharray="0.900 0.900" />
      <path d="M0 26H52M0 39H52" stroke="#cfcdd0" strokeWidth="1" />
    </>
  );
}

function SettingsArt() {
  return (
    <>
      <Grad id="st" stops={[[0, "#cfe0e8"], [0.5, "#a5abae"], [1, "#84827e"]]} />
      <Shape fill="url(#st)" />
      <g transform="translate(26 26)" fill="none">
        <circle r="22.600" fill="#191d1f" />
        <circle r="21.900" stroke="#7d8589" strokeWidth="0.600" />
        <circle r="19" stroke="#a6b0b5" strokeWidth="2.200" strokeDasharray="0.800 1.190" />
        <circle r="17" stroke="#a2acb1" strokeWidth="1.900" />
        <circle r="12.600" stroke="#6d7579" strokeWidth="1.600" strokeDasharray="0.800 0.900" />
        <circle r="11" stroke="#6d7579" strokeWidth="1.400" fill="#4a4d4e" />
        {[0, 120, 240].map((a) => (
          <path key={a} d="M0 0H16" stroke="#a9b3b8" strokeWidth="2" transform={`rotate(${a})`} />
        ))}
        <circle r="2" fill="#b5bfc4" />
        <circle r="0.900" fill="#2a2e30" />
      </g>
    </>
  );
}

function WMarkArt() {
  return (
    <>
      <clipPath id="wm"><rect x="-10" y="-5" width="67.800" height="65" /></clipPath>
      <circle cx="18.300" cy="33.800" r="22.800" fill="#3b3d41" stroke="#7a7b7d" strokeWidth="1.400" />
      <circle cx="18.300" cy="33.800" r="21.300" fill="none" stroke="#1e1f20" strokeWidth="0.600" />
      <text x="2" y="48" fontFamily="Inter, sans-serif" fontSize="37" fontWeight="900" fill="#111" stroke="#8e8e8e" strokeWidth="0.350" textLength="34.500" lengthAdjust="spacingAndGlyphs">W</text>
      <path clipPath="url(#wm)" d="M41 18.500L58 7" stroke="#fb0d14" strokeWidth="6.200" strokeLinecap="round" />
    </>
  );
}

function RemoteArt() {
  return (
    <>
      <Shape fill="#c83f2b" />
      <circle cx="26.100" cy="26" r="20.100" fill="#f3f2f2" />
      <path d="M18.600 23.700l7 6.600-7 7M34 15.300l-7.100 6.900 7.100 6.800" fill="none" stroke="#c83f2b" strokeWidth="3.500" strokeLinejoin="round" />
    </>
  );
}

function TeamsArt() {
  return (
    <>
      <Grad id="tb" x2={1} stops={[[0, "#5157c4"], [1, "#3237a4"]]} />
      <Shape fill="#fff" />
      <circle cx="38.300" cy="15.400" r="3.900" fill="#4d52c0" />
      <circle cx="26.900" cy="14" r="5.400" fill="#7077e0" />
      <path d="M33 21.500h10.200a1.200 1.200 0 0 1 1.200 1.200v9a6.200 6.200 0 0 1-9 5.600z" fill="#4b50bd" />
      <path d="M17.200 21.500h18a1.400 1.400 0 0 1 1.400 1.400v10a9.700 9.900 0 0 1-19.400 0z" fill="#7077e0" />
      <rect x="6.500" y="16" width="19.500" height="19.500" rx="1.600" fill="url(#tb)" />
      <text x="16.250" y="30.900" textAnchor="middle" fontFamily="'Open Sans', sans-serif" fontWeight="600" fontSize="14.500" fill="#fff">T</text>
    </>
  );
}

function OutlookArt() {
  return (
    <>
      <Grad id="ob" x2={1} stops={[[0, "#2289e0"], [1, "#135ab5"]]} />
      <Shape fill="#fff" />
      <path d="M16.200 8.700h23.700a1.500 1.500 0 0 1 1.500 1.500V30H14.700V10.200a1.500 1.500 0 0 1 1.500-1.500z" fill="#1358a3" />
      <path d="M14.700 13.200h9v8.500h-9z" fill="#1a74c9" />
      <path d="M23.700 13.200h9v8.500h-9z" fill="#2ba3ea" />
      <path d="M32.700 13.200h8.700v8.500h-8.700z" fill="#50d0fc" />
      <path d="M14.700 21.700h18v8.500h-18z" fill="#1560b4" />
      <path d="M32.700 21.700h8.700v8h-8.700z" fill="#2a92dd" />
      <path d="M13.700 27.500L28 35l14.700-8.200v14.400a1.500 1.500 0 0 1-1.500 1.500H15.200a1.500 1.500 0 0 1-1.500-1.500z" fill="#2f9be6" />
      <path d="M28 35l14.700 7.300V27z" fill="#38aaf0" />
      <path d="M22 29.700h15.200L29.500 34.500z" fill="#1766b8" />
      <rect x="4.700" y="16" width="19.300" height="19.500" rx="1.600" fill="url(#ob)" />
      <ellipse cx="14.300" cy="25.800" rx="4" ry="4.600" fill="none" stroke="#fff" strokeWidth="2" />
    </>
  );
}

function CraftArt() {
  return (
    <>
      <Grad id="cr" x2={1} y2={0.15} stops={[[0, "#e7298a"], [0.45, "#f4716e"], [1, "#fdbb50"]]} />
      <Grad id="crg" stops={[[0, "#a2ec82"], [1, "#48d2bb"]]} />
      <clipPath id="crc"><rect width="52" height="52" rx="12" /></clipPath>
      <Shape fill="url(#cr)" />
      <g clipPath="url(#crc)">
        <path d="M-1 45L10.500 18c1.500-3.500 3.500-4.600 6.500-4.600h8L22 34 8 52H-1z" fill="#cd2d70" />
        <path d="M1.500 50L17 19l15.500 34H0z" fill="#33cdea" />
        <path d="M17 20c.8-4 4-6.600 8.200-6.600 3.700 0 6.300 2.300 7.500 5.600L50 48l-4 6H32.500L17.800 30.500c-1.700-3.200-1.700-7-.8-10.500z" fill="url(#crg)" />
      </g>
    </>
  );
}

function FaceTimeArt() {
  return (
    <>
      <Grad id="ft" stops={[[0, "#5cf376"], [1, "#24b938"]]} />
      <Grad id="ftb" stops={[[0, "#ffffff"], [0.6, "#e2f3e4"], [1, "#a5e3ad"]]} />
      <Shape fill="url(#ft)" />
      <rect x="7.900" y="14.600" width="25.200" height="23" rx="5.500" fill="url(#ftb)" />
      <path d="M34.300 23.600l7.300-6c1-.8 2-.3 2 .9v15.600c0 1.200-1 1.700-2 .9l-7.300-5.600z" fill="url(#ftb)" />
    </>
  );
}

function PreviewArt() {
  return (
    <>
      <Grad id="sky" stops={[[0, "#8fb2ea"], [1, "#b4c6e2"]]} />
      <Grad id="loupe" x2={1} y2={0} stops={[[0, "#8b8f92"], [0.25, "#e9ecee"], [0.6, "#b9bdc0"], [1, "#5a5d60"]]} />
      <clipPath id="pv"><rect x="4" y="4.200" width="43.600" height="43.800" rx="8" /></clipPath>
      <Shape fill="#f0f0f0" />
      <g clipPath="url(#pv)">
        <rect width="52" height="28" fill="url(#sky)" />
        <rect y="27.700" width="52" height="25" fill="#1c2a63" />
        <path d="M4 35l8-1 4 3 6-2 5 4 20 1v12H4z" fill="#8fb0cc" />
        <path d="M8 35l5-1.500 3 2.500-4 1zM5 42l6-3 6 4 5-2 3 5-8 3H7z" fill="#f4f7fa" />
        <path d="M4 37l5 1 3 3-8 3zM17 37l8 2-3 3-6-2zM8 46l6-1 8 3H9z" fill="#6a5240" />
      </g>
      <path d="M28.500 36.500h18.500L53 49.500c.8 3.500-5 5-15.400 5S21.300 53 22.200 49.500z" fill="url(#loupe)" opacity="0.920" />
      <path d="M30.500 38h14.500l3.500 10.500h-21z" fill="#4a5560" opacity="0.550" />
      <ellipse cx="37.600" cy="50" rx="10.500" ry="2.400" fill="#f1f1f1" />
      <path d="M33 41l3-1 1 4-4 3zM40 42l3 1-1 4z" fill="#e6e6e6" />
      <path d="M26 28.500c0-4 23.400-4 23.400 0v6.500c0 2.500-23.400 2.500-23.400 0z" fill="#111" />
      <ellipse cx="37.700" cy="27.800" rx="10" ry="1.800" fill="#2e2e2e" />
      <path d="M29 30.500v5M46 30.500v5" stroke="#444" strokeWidth="0.800" />
    </>
  );
}

function TrashArt() {
  return (
    <>
      <Grad id="tr" x2={1} y2={0} stops={[[0, "#6a6e70"], [0.2, "#818587"], [0.5, "#5e6264"], [0.8, "#7b7f81"], [1, "#55595b"]]} />
      <path d="M3.300 3C3.300-2.500 48.500-2.500 48.500 3l-5.200 47c-.6 5.700-33.400 5.700-34.200 0z" fill="url(#tr)" />
      <ellipse cx="25.900" cy="3.200" rx="22" ry="5.200" fill="#4a4e50" stroke="#a3a7a9" strokeWidth="0.700" />
      <path d="M6 2l4-4.500 5-2 4 3 3-1 4 1 3-3.500 4 3 4 .5 4 3 2 4-6 3.500-9 1.500-9-.5-8-2z" fill="#d9dada" />
      <path d="M8 3l4-4 3 2-3 5zM17-2l4 2-2 5-4-1zM31-2l5 3-4 5-2-3zM38 0l4 3-3 3z" fill="#8f9496" />
      <path d="M14 2l3 4 5-2-2 4-7-1zM24 3l3-4 2 5-3 3zM33 4l5-2-1 4z" fill="#fff" />
      <path d="M18 2l4-1 1 3-4 1z" fill="#43b9dd" />
      <path d="M29 3l3-3 3 5-3 3z" fill="#b5532c" />
      <path d="M26 5l2 3h3l-1-4z" fill="#2d5aa8" />
      <path d="M4.500 5.500C12 9.500 40 9.500 47.300 5.500" fill="none" stroke="#999d9f" strokeWidth="0.800" />
      <path d="M18 9l8 2-4 10-5-3zM33 13l6-3-3 9z" fill="#8e9294" opacity="0.600" />
      <path d="M10 46c6 4 26 4 32 0l-.8 5c-4 4.500-26 4.500-31 0z" fill="#8c9092" opacity="0.550" />
    </>
  );
}

type DockEntry = { id: string; art: () => ReactNode; badge?: string; running?: boolean } | "divider";

const DOCK: DockEntry[] = [
  { id: "finder", art: FinderArt, running: true },
  { id: "mail", art: MailArt },
  { id: "zoom", art: ZoomArt, running: true },
  { id: "chrome", art: ChromeArt, running: true },
  { id: "obs", art: ObsArt },
  { id: "capcut", art: CapCutArt },
  { id: "resolve", art: ResolveArt },
  { id: "terminal", art: TerminalArt },
  { id: "vscode", art: VsCodeArt, running: true },
  { id: "postman", art: PostmanArt },
  { id: "slack", art: SlackArt, running: true },
  { id: "discord", art: DiscordArt, badge: "1", running: true },
  { id: "messages", art: MessagesArt, badge: "2" },
  { id: "spotify", art: SpotifyArt },
  { id: "notes", art: NotesArt },
  { id: "settings", art: SettingsArt },
  { id: "wmark", art: WMarkArt },
  { id: "remote", art: RemoteArt },
  { id: "teams", art: TeamsArt },
  { id: "outlook", art: OutlookArt },
  { id: "craft", art: CraftArt },
  "divider",
  { id: "facetime", art: FaceTimeArt, badge: "1" },
  { id: "preview", art: PreviewArt },
  { id: "vscode-window", art: VsCodeArt },
  "divider",
  { id: "trash", art: TrashArt },
];

function Dock() {
  return (
    <DockBar>
      {DOCK.map((entry, i) => {
        if (entry === "divider") return <DockDivider key={i} />;
        const Art = entry.art;
        return (
          <DockItem key={entry.id}>
            <svg width="52" height="52" viewBox="0 0 52 52">
              <Art />
            </svg>
            {entry.badge && <DockBadge>{entry.badge}</DockBadge>}
            {entry.running && <RunningDot />}
          </DockItem>
        );
      })}
    </DockBar>
  );
}

export default function App() {
  return (
    <>
      <GlobalStyle />
      <Desktop>
        <MenuBar />
        <BrowserWindow>
          <BrowserChrome />
          <AuthorsPage />
        </BrowserWindow>
        <Wallpaper>
          <Dock />
        </Wallpaper>
      </Desktop>
    </>
  );
}
